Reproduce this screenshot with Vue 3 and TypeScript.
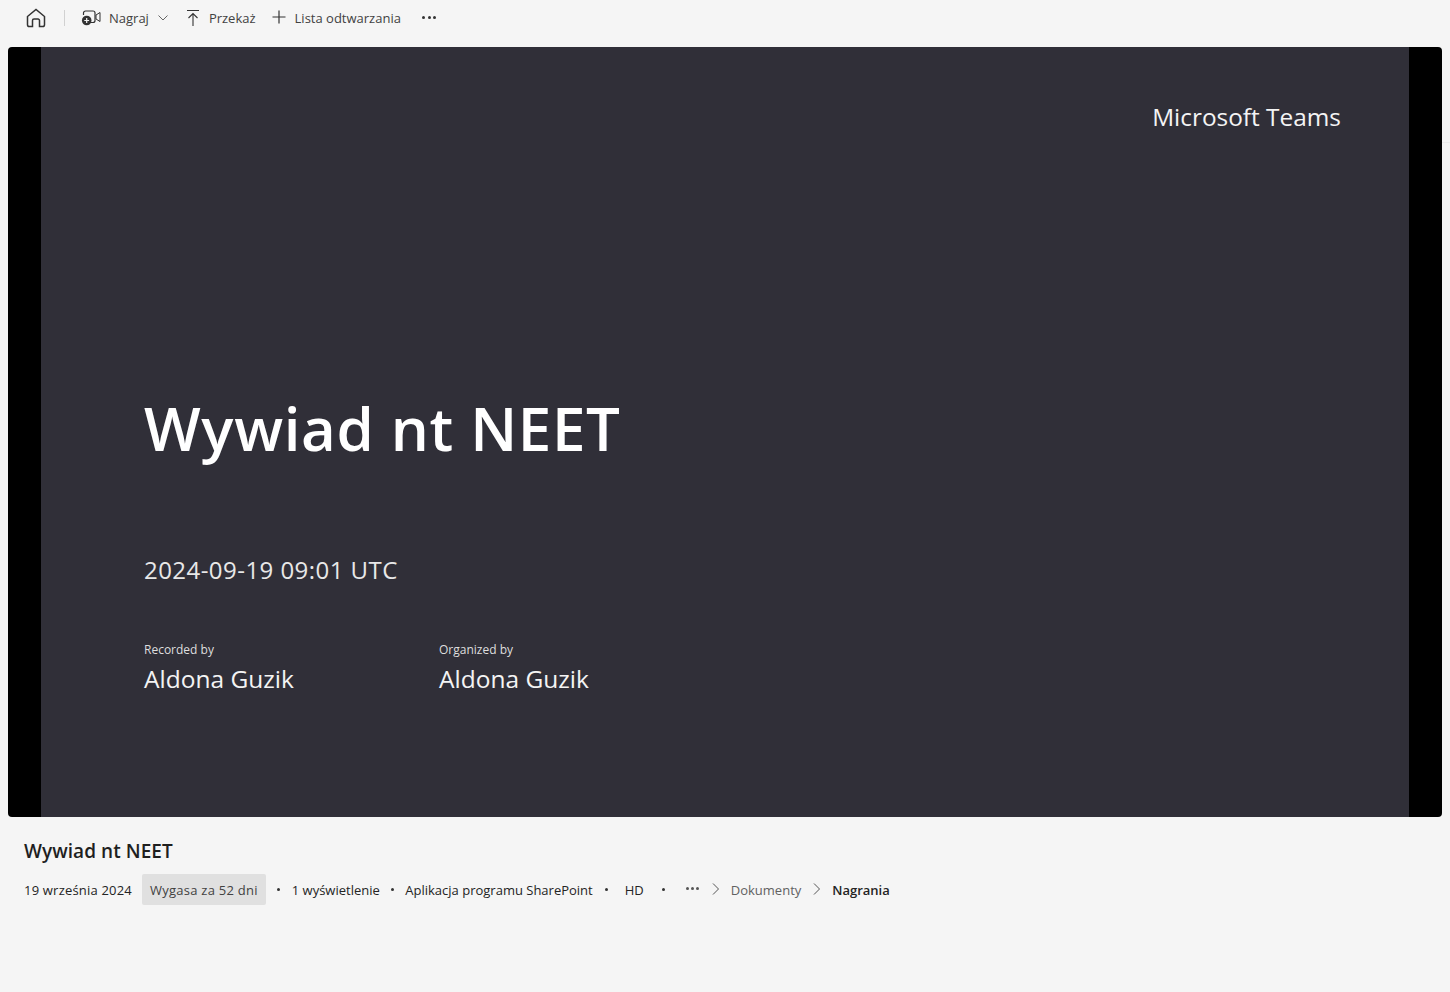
<script setup lang="ts">
const meta = ['1 wyświetlenie', 'Aplikacja programu SharePoint'];
</script>

<template>
  <div class="page">
    <nav class="toolbar">
      <button class="tool home" aria-label="Strona główna">
        <svg width="22" height="22" viewBox="0 0 22 22" fill="none" stroke="#333" stroke-width="1.500">
          <path d="M2.500 9.500 11 2.500l8.500 7v8.200a1.800 1.800 0 0 1-1.800 1.800h-3.200v-6a1.500 1.500 0 0 0-1.500-1.500H9a1.500 1.500 0 0 0-1.500 1.500v6H4.300a1.800 1.800 0 0 1-1.800-1.800z" />
        </svg>
      </button>
      <span class="divider"></span>
      <button class="tool record">
        <svg width="20" height="18" viewBox="0 0 20 18" fill="none">
          <path d="M2.500 6V4a2 2 0 0 1 2-2h7.500a2 2 0 0 1 2 2v7.500a2 2 0 0 1-2 2H9" stroke="#333" stroke-width="1.200" />
          <path d="M15 6 19 3.500v9L15 10z" stroke="#333" stroke-width="1" />
          <circle cx="5.700" cy="11.500" r="4.800" fill="#333" />
          <path d="M5.700 9.100v4.800M3.300 11.500h4.800" stroke="#f5f5f5" stroke-width="1.200" />
        </svg>
        <span>Nagraj</span>
        <svg class="chev" width="12" height="12" viewBox="0 0 12 12" fill="none" stroke="#666" stroke-width="1">
          <path d="M1.500 3.500 6 8l4.500-4.500" />
        </svg>
      </button>
      <button class="tool cast">
        <svg width="16" height="20" viewBox="0 0 16 20" fill="none" stroke="#333" stroke-width="1.100">
          <path d="M2 2.500h12M8 18V5.500M3.500 10 8 5.500l4.500 4.500" />
        </svg>
        <span>Przekaż</span>
      </button>
      <button class="tool playlist">
        <svg class="plus" width="16" height="16" viewBox="0 0 16 16" fill="none" stroke="#333" stroke-width="1.200">
          <path d="M8 1.500v13M1.500 8h13" />
        </svg>
        <span>Lista odtwarzania</span>
      </button>
      <button class="tool more" aria-label="Więcej">
        <i></i><i></i><i></i>
      </button>
    </nav>

    <section class="player">
      <div class="slide">
        <div class="brand">Microsoft Teams</div>
        <h1>Wywiad nt NEET</h1>
        <div class="stamp">2024-09-19 09:01 UTC</div>
        <div class="people">
          <div class="person">
            <div class="role">Recorded by</div>
            <div class="name">Aldona Guzik</div>
          </div>
          <div class="person">
            <div class="role">Organized by</div>
            <div class="name">Aldona Guzik</div>
          </div>
        </div>
      </div>
    </section>
    <span class="edge-line"></span>

    <section class="info">
      <h2>Wywiad nt NEET</h2>
      <div class="meta">
        <span class="date">19 września 2024</span>
        <span class="expiry">Wygasa za 52 dni</span>
        <span class="dot d1"></span>
        <span>{{ meta[0] }}</span>
        <span class="dot d2"></span>
        <span>{{ meta[1] }}</span>
        <span class="dot d3"></span>
        <span class="hd">HD</span>
        <span class="dot d4"></span>
        <span class="crumb-more"><i></i><i></i><i></i></span>
        <svg class="crumb" width="8" height="12" viewBox="0 0 8 12" fill="none" stroke="#555" stroke-width="1">
          <path d="m1 .5 5.500 5.500L1 11.500" />
        </svg>
        <span class="muted">Dokumenty</span>
        <svg class="crumb" width="8" height="12" viewBox="0 0 8 12" fill="none" stroke="#555" stroke-width="1">
          <path d="m1 .5 5.500 5.500L1 11.500" />
        </svg>
        <strong>Nagrania</strong>
      </div>
    </section>
  </div>
</template>

<style>
html, body { margin: 0; background: #f5f5f5; }
</style>

<style scoped>
.page {
  position: relative;
  height: 992px;
  overflow: hidden;
  background: #f5f5f5;
  color: #242424;
  font-family: "Open Sans", "Noto Sans", sans-serif;
}
.edge-line {
  position: absolute;
  top: 142px;
  left: 1442px;
  width: 8px;
  height: 1px;
  background: #ececec;
}
.toolbar {
  height: 47px;
  box-sizing: border-box;
  padding: 0 0 12px 25px;
  display: flex;
  align-items: center;
}
.tool {
  display: flex;
  align-items: center;
  border: 0;
  padding: 0;
  background: none;
  color: #424242;
  font: inherit;
  font-size: 13px;
}
.divider { width: 1px; height: 16px; background: #d1d1d1; margin: 0 16px 0 17px; }
.record span { margin-left: 8px; }
.chev { margin-left: 8px; }
.cast { margin-left: 16px; }
.cast span { margin-left: 8px; }
.playlist { margin-left: 15px; }
.playlist span { margin-left: 8px; }
.plus { margin-top: -2px; }
.more { margin-left: 21.500px; gap: 2.500px; }
.more i, .crumb-more i { display: block; border-radius: 50%; background: #333; }
.more i { width: 3px; height: 3px; }
.player {
  margin: 0 8px;
  height: 770px;
  background: #000;
  border-radius: 4px;
  overflow: hidden;
  display: flex;
  justify-content: center;
}
.slide {
  width: 1368px;
  background: #302f38;
  color: #f4f4f4;
  box-sizing: border-box;
  padding: 0 68px 0 103px;
  display: flex;
  flex-direction: column;
}
.brand {
  margin-top: 53px;
  align-self: flex-end;
  font-size: 24.400px;
  line-height: 33px;
}
h1 {
  margin: 254px 0 0;
  font-size: 60px;
  line-height: 82px;
  letter-spacing: .65px;
  font-weight: 600;
  color: #fff;
}
.stamp { margin-top: 84px; font-size: 24px; letter-spacing: .45px; line-height: 33px; color: #e8e8e8; }
.people { margin-top: 55px; display: flex; }
.person { width: 295px; }
.role { font-size: 12px; line-height: 18px; color: #dedede; }
.name { margin-top: 3px; font-size: 24.500px; line-height: 34px; }
.info { padding: 20px 24px 0; }
h2 { margin: 0; font-size: 19px; line-height: 28px; letter-spacing: .05px; font-weight: 600; color: #1f1f1f; }
.meta {
  margin-top: 9px;
  height: 31px;
  display: flex;
  align-items: center;
  font-size: 13px;
  white-space: nowrap;
}
.date { letter-spacing: .2px; }
.expiry {
  margin-left: 10px;
  height: 31px;
  padding: 0 8px;
  line-height: 32px;
  letter-spacing: .25px;
  border-radius: 2px;
  background: #e0e0e0;
  color: #424242;
}
.dot { width: 3px; height: 3px; border-radius: 50%; background: #333; }
.d1 { margin: 0 11.500px; }
.d2 { margin: 0 11.500px 0 11px; }
.d3 { margin: 0 0 0 12px; }
.hd { margin-left: 17px; }
.d4 { margin: 0 0 0 18px; }
.crumb-more { display: flex; gap: 2px; margin: -3px 0 0 21px; }
.crumb-more i { width: 3px; height: 3px; background: #555; }
.crumb { margin: -2px 0 0 13px; }
.muted { margin-left: 11px; color: #616161; }
.muted + .crumb { margin-left: 12px; }
strong { margin-left: 11px; font-weight: 600; color: #242424; }
</style>
